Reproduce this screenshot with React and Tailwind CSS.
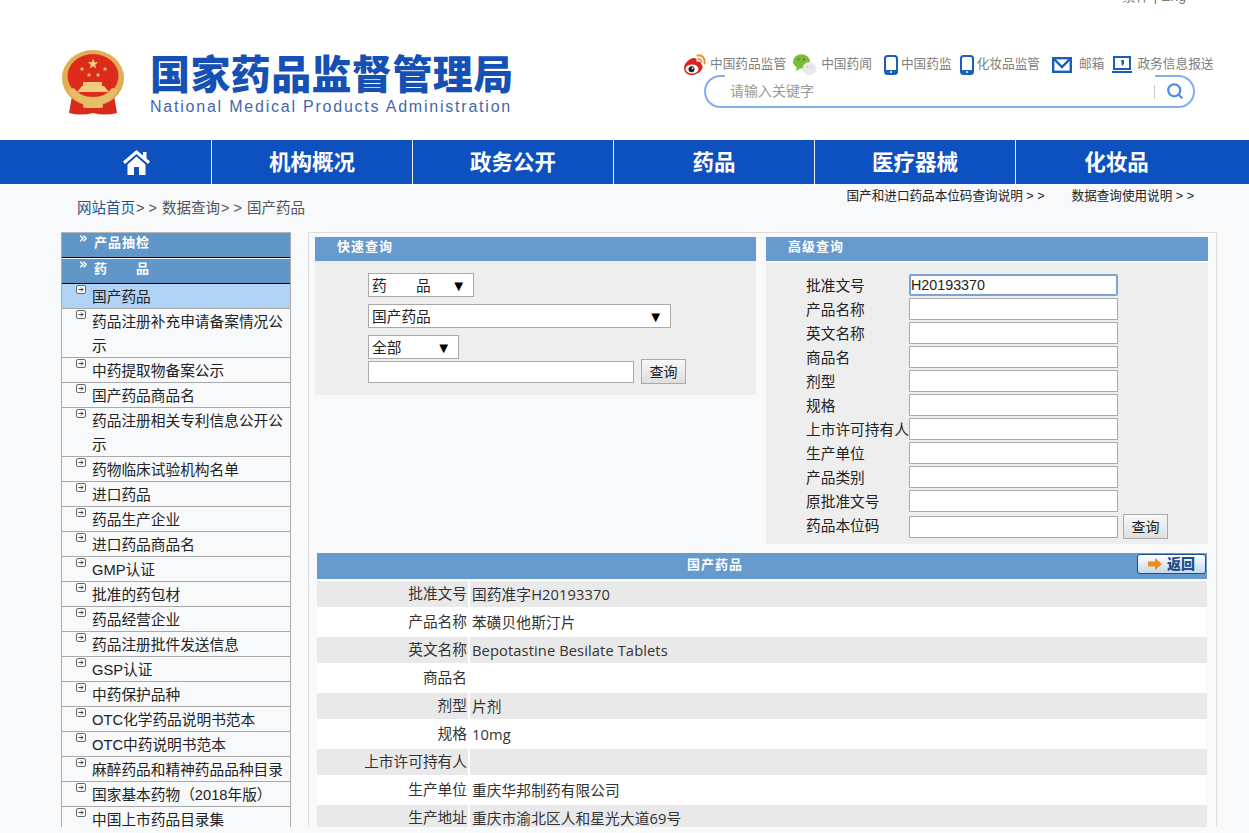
import { ChevronsRight, Search } from 'lucide-react';

const CJK = "font-['Liberation_Sans','Noto_Sans_CJK_SC',sans-serif]";

const menu = [
  { label: '国产药品', active: true },
  { label: '药品注册补充申请备案情况公示' },
  { label: '中药提取物备案公示' },
  { label: '国产药品商品名' },
  { label: '药品注册相关专利信息公开公示' },
  { label: '药物临床试验机构名单' },
  { label: '进口药品' },
  { label: '药品生产企业' },
  { label: '进口药品商品名' },
  { label: 'GMP认证' },
  { label: '批准的药包材' },
  { label: '药品经营企业' },
  { label: '药品注册批件发送信息' },
  { label: 'GSP认证' },
  { label: '中药保护品种' },
  { label: 'OTC化学药品说明书范本' },
  { label: 'OTC中药说明书范本' },
  { label: '麻醉药品和精神药品品种目录' },
  { label: '国家基本药物（2018年版）' },
  { label: '中国上市药品目录集' },
];

const advFields = ['批准文号', '产品名称', '英文名称', '商品名', '剂型', '规格', '上市许可持有人', '生产单位', '产品类别', '原批准文号', '药品本位码'];

const details = [
  ['批准文号', '国药准字H20193370'],
  ['产品名称', '苯磺贝他斯汀片'],
  ['英文名称', 'Bepotastine Besilate Tablets'],
  ['商品名', ''],
  ['剂型', '片剂'],
  ['规格', '10mg'],
  ['上市许可持有人', ''],
  ['生产单位', '重庆华邦制药有限公司'],
  ['生产地址', '重庆市渝北区人和星光大道69号'],
];

function Emblem() {
  const stars = [[31, 14, 5.5], [20, 19, 2.6], [43, 19, 2.6], [27, 25, 2.6], [36, 25, 2.6]];
  return (
    <svg width="62" height="66" viewBox="0 0 62 66">
      <path d="M10 46 L7 63 Q19 66 31 63 Q43 66 55 63 L52 46 Z" fill="#d92a1c" />
      <ellipse cx="31" cy="28" rx="31" ry="28" fill="#dfae55" />
      <ellipse cx="31" cy="26" rx="25.5" ry="22" fill="#dd2a1b" />
      {stars.map(([x, y, r], i) => (
        <polygon
          key={i}
          fill="#f3d27a"
          points={[0, 1, 2, 3, 4, 5, 6, 7, 8, 9].map(k => {
            const a = -Math.PI / 2 + (k * Math.PI) / 5;
            const d = k % 2 ? r * 0.4 : r;
            return `${x + d * Math.cos(a)},${y + d * Math.sin(a)}`;
          }).join(' ')}
        />
      ))}
      <rect x="21" y="32" width="19" height="4" fill="#eec77b" />
      <path d="M15 42 L20 36 H42 L47 42 Z" fill="#f0cf85" />
      <path d="M6 40 Q14 54 31 55 Q48 54 56 40 L50 38 Q44 47 31 47 Q18 47 12 38 Z" fill="#e8bd68" />
      <rect x="21" y="53" width="20" height="5" rx="2" fill="#e8bd68" />
    </svg>
  );
}

function WeiboIcon() {
  return (
    <svg width="23" height="22" viewBox="0 0 23 22" fill="none">
      <path d="M1 14 C1 9 7 4 11 4 C13.5 4 14 6 13.5 8 C16 7 18 7.5 18 10 C20 11 20 13 19 15 C17 19 12 21 8 21 C4 21 1 18 1 14 Z" fill="#d8231f" />
      <ellipse cx="9" cy="15" rx="6.5" ry="4.6" fill="#fff" />
      <circle cx="8.5" cy="15.2" r="3" fill="#222" />
      <circle cx="9.5" cy="14.4" r="0.8" fill="#fff" />
      <path d="M14.5 1.5 C19 0.5 22.5 4.5 21.5 9.5" stroke="#f0932b" strokeWidth="2" strokeLinecap="round" />
      <path d="M15 5 C17.5 4.5 19 6.5 18.5 8.5" stroke="#f0932b" strokeWidth="1.6" strokeLinecap="round" />
    </svg>
  );
}

function WechatIcon() {
  return (
    <svg width="24" height="22" viewBox="0 0 24 22">
      <ellipse cx="8.5" cy="7.5" rx="8.5" ry="7.2" fill="#7dbb3a" />
      <path d="M4 12 L3 17 L8 14 Z" fill="#7dbb3a" />
      <circle cx="5.5" cy="5.5" r="1.1" fill="#4d7f1d" />
      <circle cx="11" cy="5.5" r="1.1" fill="#4d7f1d" />
      <ellipse cx="16.5" cy="14.5" rx="7" ry="6.5" fill="#e9e9e9" />
      <circle cx="14.5" cy="13" r="0.8" fill="#bbb" />
      <circle cx="18.5" cy="13" r="0.8" fill="#bbb" />
    </svg>
  );
}

function PhoneIcon() {
  return (
    <svg width="14" height="20" viewBox="0 0 14 20">
      <rect x="1" y="1" width="12" height="18" rx="2.5" fill="#fff" stroke="#1c5fb8" strokeWidth="2" />
      <rect x="1" y="15" width="12" height="4" fill="#1c5fb8" />
      <circle cx="7" cy="17" r="1" fill="#fff" />
    </svg>
  );
}

function MailIcon() {
  return (
    <svg width="20" height="16" viewBox="0 0 20 16" fill="none" stroke="#1c5fb8" strokeWidth="2.4">
      <rect x="1.2" y="1.2" width="17.6" height="13.6" />
      <path d="M2 2 L10 10 L18 2" />
    </svg>
  );
}

function MonitorIcon() {
  return (
    <svg width="20" height="18" viewBox="0 0 20 18">
      <rect x="2" y="1" width="16" height="12" fill="#fff" stroke="#1c5fb8" strokeWidth="2" />
      <rect x="0" y="15" width="20" height="2" fill="#1c5fb8" />
      <path d="M9 4 H12 V8 L10 10 Z" fill="#1c5fb8" />
    </svg>
  );
}

function HomeIcon() {
  return (
    <svg width="27" height="25" viewBox="0 0 27 25" fill="#fff">
      <path d="M13.5 0 L20 5.5 V2 H23.5 V8.5 L27 11.5 L25 14 L13.5 4 L2 14 L0 11.5 Z" />
      <path d="M4.5 14.5 L13.5 6.5 L22.5 14.5 V25 H16 V17 H11 V25 H4.5 Z" />
    </svg>
  );
}

function BulletIcon() {
  return (
    <svg width="10" height="9" viewBox="0 0 10 9" fill="none" className="absolute left-[14px] top-px">
      <rect x="0.5" y="0.5" width="9" height="8" rx="1.5" fill="#fff" stroke="#666" />
      <path d="M2.5 4.5 H7 M5 2.5 L7 4.5 L5 6.5" stroke="#444" />
    </svg>
  );
}

function TopLink({ icon, label, className = '' }) {
  return (
    <div className={`flex items-center ${className}`}>
      {icon}
      <span>{label}</span>
    </div>
  );
}

function SectionHead({ title }) {
  return (
    <div className="h-6 bg-[#6699cc] pl-[22px] text-[13px] leading-5 font-bold tracking-[1px] text-white">{title}</div>
  );
}

function FakeSelect({ width, label }) {
  return (
    <div className={`flex h-6 items-center justify-between border border-[#aaa] bg-white pl-[3px] pr-[7px] text-[14.7px] text-[#222] ${width}`}>
      <span className="relative top-px whitespace-pre">{label}</span>
      <span className="text-[15px] leading-none text-black">▼</span>
    </div>
  );
}

function QueryButton() {
  return (
    <button className="h-[25px] w-[45px] shrink-0 border border-[#aaa] bg-gradient-to-b from-[#f8f8f8] to-[#dedede] pt-px text-[14px] text-[#222]">查询</button>
  );
}

function FieldInput({ value, focused, className = '' }) {
  return (
    <input
      readOnly
      defaultValue={value}
      className={`h-[22px] w-[209px] bg-white font-['Liberation_Sans',sans-serif] text-[14.3px] text-[#222] outline-none ${focused ? 'rounded-[2px] border-2 border-[#7da2d8] pl-0' : 'border border-[#aaa]'} ${className}`}
    />
  );
}

export default function App() {
  return (
    <div className={`relative h-[833px] w-[1249px] overflow-hidden bg-[#f7f9fb] ${CJK}`}>
      {/* clipped language switch at the very top */}
      <div className="absolute right-[63px] top-0 h-1 overflow-hidden">
        <div className="-mt-[12px] text-[14px] leading-4 text-[#777]">繁体 | Eng</div>
      </div>

      {/* Header */}
      <header className="flex h-[140px] justify-between bg-white">
        <div className="flex pl-[62px] pt-[50px]">
          <Emblem />
          <div className="ml-[26px] mt-[2px]">
            <div className="text-[40px] font-black leading-[46px] tracking-[0.4px] text-[#1550b5]">国家药品监督管理局</div>
            <div className="whitespace-nowrap text-[16px] leading-[18px] tracking-[1.78px] text-[#3f68ad]">National Medical Products Administration</div>
          </div>
        </div>
        <div className="mr-[35px] flex w-[531px] flex-col pt-[55px]">
          <div className="flex h-[20px] items-center whitespace-nowrap text-[12.7px] text-[#808080]">
            <TopLink icon={<span className="mr-1 flex"><WeiboIcon /></span>} label="中国药品监管" />
            <TopLink className="ml-[7px]" icon={<span className="mr-1 flex"><WechatIcon /></span>} label="中国药闻" />
            <TopLink className="ml-3" icon={<span className="mr-[3px] flex"><PhoneIcon /></span>} label="中国药监" />
            <TopLink className="ml-2" icon={<span className="mr-[3px] flex"><PhoneIcon /></span>} label="化妆品监管" />
            <TopLink className="ml-3" icon={<span className="mr-[7px] flex"><MailIcon /></span>} label="邮箱" />
            <TopLink className="ml-2" icon={<span className="mr-[5px] flex"><MonitorIcon /></span>} label="政务信息报送" />
          </div>
          <div className="relative ml-[21px] flex h-[33px] w-[491px] items-center rounded-full border-2 border-[#7fb0ea]">
            {/* the input sits over the top border of the pill */}
            <div className="absolute -top-[2px] bottom-0 left-[19px] right-[38px] bg-white" />
            <span className="relative ml-[24px] text-[14px] text-[#999]">请输入关键字</span>
            <span className="relative ml-auto mr-[38px] h-[14px] w-px bg-[#ccc]" />
            <Search className="absolute right-[9px] top-[5px] text-[#4a90e2]" size={18} strokeWidth={3} />
          </div>
        </div>
      </header>

      {/* Main nav */}
      <nav className="flex h-[44px] bg-[#0d50c0] pl-[61px] text-[21.5px] font-bold text-white">
        <div className="flex w-[151px] items-center justify-center border-r border-white/90">
          <HomeIcon />
        </div>
        {['机构概况', '政务公开', '药品', '医疗器械', '化妆品'].map((item, i) => (
          <div key={item} className={`flex w-[201px] items-center justify-center pt-[3px] ${i < 4 ? 'border-r border-white/90' : ''}`}>{item}</div>
        ))}
      </nav>

      {/* Breadcrumb */}
      <div className="relative flex h-[48px] whitespace-pre pl-[77px] pt-[14px] text-[14.5px] leading-5 text-[#555]">
        <span className="text-[#28528f]">网站首页</span>
        <span className="ml-px">{'> > '}</span>
        <span className="ml-px">数据查询</span>
        <span className="ml-px">{'> > '}</span>
        <span className="ml-px">国产药品</span>
        <div className="absolute right-[55px] top-[4px] flex gap-[27px] whitespace-pre text-[12.6px] leading-[17px] text-[#222]">
          <span>国产和进口药品本位码查询说明 &gt; &gt;</span>
          <span>数据查询使用说明 &gt; &gt;</span>
        </div>
      </div>

      <div className="flex h-[595px] overflow-hidden pl-[61px]">
        {/* Sidebar */}
        <aside className="w-[230px] shrink-0 border-x border-t border-x-[#a9a9a9] border-t-[#b5b5b5]">
          {['产品抽检', '药　　品'].map(title => (
            <div key={title} className="relative h-[26px] whitespace-pre border-y border-t-white border-b-black bg-[#6096c8] pl-[32px] text-[13px] font-bold leading-[20px] tracking-[1px] text-white first:h-[25px] first:border-t-0">
              <ChevronsRight className="absolute left-[16px] top-0" size={11} strokeWidth={3.5} />
              {title}
            </div>
          ))}
          {menu.map(item => (
            <div key={item.label} className={`relative border-b border-[#a9a9a9] pl-[30px] pr-1 text-[14.7px] leading-6 text-[#222] ${item.active ? 'bg-[#b0d2f5]' : ''}`}>
              <BulletIcon />
              <span className="relative top-px">{item.label}</span>
            </div>
          ))}
        </aside>

        {/* Right panel */}
        <main className="ml-[17px] w-[909px] shrink-0 border-x border-t border-[#dcdcdc] pl-[6px] pt-1">
          <div className="flex gap-[10px]">
            <section className="w-[441px] self-start">
              <SectionHead title="快速查询" />
              <div className="flex flex-col gap-[7px] bg-[#eeeeee] pb-[11px] pl-[53px] pt-3">
                <FakeSelect width="w-[106px]" label="药　　品" />
                <FakeSelect width="w-[303px]" label="国产药品" />
                <div>
                  <FakeSelect width="w-[91px]" label="全部" />
                  <div className="flex items-center gap-[7px]">
                    <input readOnly className="h-[22px] w-[266px] border border-[#aaa] bg-white" />
                    <QueryButton />
                  </div>
                </div>
              </div>
            </section>

            <section className="w-[442px]">
              <SectionHead title="高级查询" />
              <div className="mt-[2px] grid grid-cols-[103px_auto] justify-start bg-[#eeeeee] pb-[6px] pl-[40px] pt-[11px] text-[14.7px] text-[#222]">
                {advFields.map((label, i) => {
                  const last = i === advFields.length - 1;
                  return (
                    <div key={label} className="contents">
                      <div className="whitespace-nowrap pt-px leading-[23px]">{label}</div>
                      <div className="flex h-6 items-start gap-[5px]">
                        <FieldInput value={i === 0 ? 'H20193370' : ''} focused={i === 0} className={last ? 'mt-[2px]' : ''} />
                        {last && <QueryButton />}
                      </div>
                    </div>
                  );
                })}
              </div>
            </section>
          </div>

          {/* Detail table */}
          <section className="ml-[2px] mt-[9px] w-[890px]">
            <div className="relative h-[26px] bg-[#6699cc] pr-[94px] text-center text-[13px] font-bold leading-[24px] tracking-[1px] text-white">
              国产药品
              <div className="absolute right-px top-px flex h-5 w-[69px] items-center justify-center gap-[5px] rounded-[3px] border border-[#1d4f8c] bg-gradient-to-b from-white to-[#c5d8ec]">
                <svg width="14" height="12" viewBox="0 0 14 12"><path d="M0 3.5 H7 V0 L14 6 L7 12 V8.5 H0 Z" fill="#ef8a1d" /></svg>
                <span className="text-[14px] font-black leading-none tracking-normal text-[#1d4f8c]">返回</span>
              </div>
            </div>
            <div className="mt-px bg-white">
              {details.map(([label, value], i) => (
                <div key={label} className={`grid h-7 grid-cols-[151px_1fr] gap-x-[2px] py-px text-[14.7px] leading-[26px] text-[#333] ${i % 2 === 0 ? '*:bg-[#e9e9e9]' : ''}`}>
                  <div className="pr-px text-right">{label}</div>
                  <div className="pl-[2px] font-['Open_Sans','Noto_Sans_CJK_SC',sans-serif] tracking-[0.1px]">{value}</div>
                </div>
              ))}
            </div>
          </section>
        </main>
      </div>
    </div>
  );
}
